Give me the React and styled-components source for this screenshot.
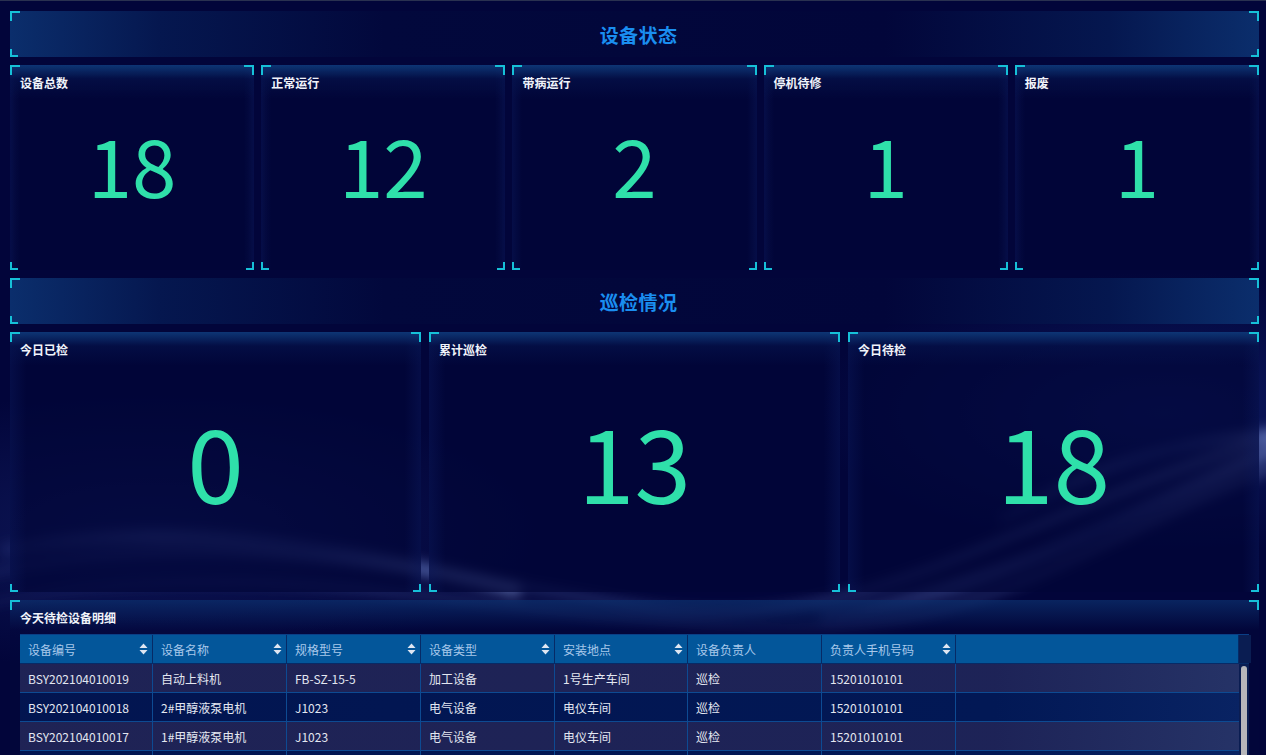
import styled, { createGlobalStyle, css } from "styled-components";

const GlobalStyle = createGlobalStyle`
  html, body { margin: 0; padding: 0; background: #02053a; }
  body {
    font-family: "Noto Sans CJK SC", "Noto Sans", sans-serif;
    color: #e6ebf5;
    border-top: 1px solid #2a3150;
  }
  * { box-sizing: border-box; }
`;

const Screen = styled.div`
  position: relative;
  min-height: 100vh;
  padding: 10px 7px 10px 10px;
  overflow: hidden;
  background:
    radial-gradient(ellipse 40% 22% at 92% 45%, rgba(30, 60, 160, 0.35), transparent 70%),
    radial-gradient(ellipse 45% 22% at 12% 58%, rgba(36, 56, 140, 0.35), transparent 70%),
    #02053a;
`;

const Waves = styled.svg`
  position: absolute;
  left: 0;
  top: 400px;
  width: 100%;
  height: 300px;
  pointer-events: none;
  z-index: 0;
`;

const Content = styled.div`
  position: relative;
  z-index: 1;
  display: flex;
  flex-direction: column;
  gap: 8px;
`;

// small cyan brackets on the corners of every panel
const bracket = css`
  &::before, &::after, & > .c-bl, & > .c-br {
    content: "";
    position: absolute;
    width: 8px;
    height: 8px;
    border-color: #16c0d8;
    border-style: solid;
    pointer-events: none;
  }
  &::before { top: 0; left: 0; border-width: 2px 0 0 2px; }
  &::after { top: 0; right: 0; border-width: 2px 2px 0 0; }
  & > .c-bl { bottom: 0; left: 0; border-width: 0 0 2px 2px; }
  & > .c-br { bottom: 0; right: 0; border-width: 0 2px 2px 0; }
`;

const TitleBar = styled.div`
  position: relative;
  height: 46px;
  display: flex;
  align-items: center;
  justify-content: center;
  padding-left: 8px;
  background: linear-gradient(
    to right,
    #0b2e6c 0%,
    #05174f 12%,
    #02083c 30%,
    #02063a 70%,
    #05174f 88%,
    #0b2e6c 100%
  );
  ${bracket}
`;

const Title = styled.h2`
  margin: 0;
  font-size: 19px;
  font-weight: 700;
  color: #1a8ef0;
  letter-spacing: 0.4px;
`;

const CardRow = styled.div`
  display: grid;
  grid-template-columns: repeat(${(p) => p.$cols}, 1fr);
  gap: ${(p) => p.$gap}px;
  height: ${(p) => p.$height}px;
`;

const Card = styled.div`
  position: relative;
  display: flex;
  flex-direction: column;
  background:
    linear-gradient(to bottom, rgba(14, 56, 120, 0.95) 0, rgba(6, 22, 80, 0.5) 14px, rgba(2, 6, 58, 0) 34px),
    linear-gradient(to right, rgba(14, 30, 100, 0.35), rgba(2, 6, 58, 0) 4%, rgba(2, 6, 58, 0) 96%, rgba(14, 30, 100, 0.35)),
    rgba(2, 6, 56, 0.7);
  ${bracket}
`;

const Label = styled.div`
  padding: 10px 10px 0;
  font-size: 12px;
  font-weight: 700;
  line-height: 16px;
  color: #f0f3fa;
`;

const Value = styled.div`
  flex: 1;
  display: flex;
  align-items: center;
  justify-content: center;
  padding-bottom: ${(p) => p.$lift}px;
  font-size: ${(p) => p.$size}px;
  font-weight: 400;
  line-height: 1;
  color: #2fe0aa;
`;

const TablePanel = styled.div`
  position: relative;
  padding: 10px 10px 10px;
  background:
    linear-gradient(to bottom, rgba(14, 56, 120, 0.6) 0, rgba(2, 6, 58, 0) 30px),
    rgba(2, 8, 60, 0.4);
  ${bracket}
`;

const PanelLabel = styled(Label)`
  padding: 0 0 8px;
`;

const cols = "133px 134px 134px 134px 133px 134px 134px 1fr";

const HeadRow = styled.div`
  display: grid;
  grid-template-columns: ${cols} 10px;
  height: 30px;
  background: #03569a;
  border-top: 1px solid #0a3f86;
  border-bottom: 1px solid #072a66;
`;

const HeadCell = styled.div`
  display: flex;
  align-items: center;
  justify-content: space-between;
  padding: 0 4px 0 8px;
  font-size: 12px;
  color: #a8c8ea;
  border-right: 1px solid #062a66;
  &:last-child { background: #0a1d52; border-right: 0; }
`;

const SortIcon = styled.svg`
  width: 9px;
  height: 12px;
  flex: none;
`;

const Body = styled.div`
  display: flex;
`;

const Rows = styled.div`
  flex: 1;
`;

const Track = styled.div`
  width: 10px;
  flex: none;
  background: #0a1d52;
  padding: 2px 2px 0;
`;

const Thumb = styled.div`
  height: 180px;
  border-radius: 3px;
  background: #b6b6ba;
`;

const Row = styled.div`
  display: grid;
  grid-template-columns: ${cols};
  height: 29px;
  border-bottom: 1px solid #0d4a92;
  background: ${(p) =>
    p.$odd
      ? "linear-gradient(to right, rgba(34, 38, 88, 0.9), rgba(34, 40, 92, 0.85) 80%, rgba(46, 62, 114, 0.8))"
      : "linear-gradient(to right, rgba(2, 22, 82, 0.92), rgba(2, 26, 88, 0.9) 80%, rgba(10, 40, 106, 0.85))"};
`;

const Cell = styled.div`
  display: flex;
  align-items: center;
  padding: 0 8px;
  font-size: 12px;
  color: #e3e7f1;
  border-right: 1px solid #0d4a92;
  white-space: nowrap;
  &:last-child { border-right: 0; }
`;

const Corners = () => (
  <>
    <span className="c-bl" />
    <span className="c-br" />
  </>
);

const Sort = () => (
  <SortIcon viewBox="0 0 9 12">
    <path d="M4.5 0.5 L8.5 5 H0.5 Z" fill="#dfe6f2" />
    <path d="M4.5 11.5 L8.5 7 H0.5 Z" fill="#dfe6f2" />
  </SortIcon>
);

const status = [
  ["设备总数", 18],
  ["正常运行", 12],
  ["带病运行", 2],
  ["停机待修", 1],
  ["报废", 1],
];

const patrol = [
  ["今日已检", 0],
  ["累计巡检", 13],
  ["今日待检", 18],
];

const headers = [
  ["设备编号", true],
  ["设备名称", true],
  ["规格型号", true],
  ["设备类型", true],
  ["安装地点", true],
  ["设备负责人", false],
  ["负责人手机号码", true],
  ["", false],
];

const rows = [
  ["BSY202104010019", "自动上料机", "FB-SZ-15-5", "加工设备", "1号生产车间", "巡检", "15201010101"],
  ["BSY202104010018", "2#甲醇液泵电机", "J1023", "电气设备", "电仪车间", "巡检", "15201010101"],
  ["BSY202104010017", "1#甲醇液泵电机", "J1023", "电气设备", "电仪车间", "巡检", "15201010101"],
  ["BSY202104010016", "循环水泵", "IS80-65", "动力设备", "2号生产车间", "巡检", "15201010101"],
  ["BSY202104010015", "空气压缩机", "GA-37", "动力设备", "空压站", "巡检", "15201010101"],
  ["BSY202104010014", "冷却塔风机", "LF-22", "电气设备", "循环水站", "巡检", "15201010101"],
  ["BSY202104010013", "反应釜搅拌器", "FY-3000", "加工设备", "1号生产车间", "巡检", "15201010101"],
  ["BSY202104010012", "离心机", "LW-450", "加工设备", "2号生产车间", "巡检", "15201010101"],
];

export default function App() {
  return (
    <>
      <GlobalStyle />
      <Screen>
        <Waves viewBox="0 0 1266 300" preserveAspectRatio="none">
          <defs>
            <filter id="soft" x="-10%" y="-50%" width="120%" height="200%">
              <feGaussianBlur stdDeviation="6" />
            </filter>
            <linearGradient id="streak" x1="0" x2="1" y1="0" y2="0">
              <stop offset="0" stopColor="#6a86e0" stopOpacity="0.12" />
              <stop offset="0.3" stopColor="#7a96e8" stopOpacity="0.32" />
              <stop offset="0.6" stopColor="#6a88e0" stopOpacity="0.25" />
              <stop offset="1" stopColor="#9ab2f4" stopOpacity="0.45" />
            </linearGradient>
          </defs>
          <g filter="url(#soft)" fill="none" stroke="url(#streak)">
            <path d="M-20 175 C 200 120, 420 170, 640 205 S 1000 120, 1290 30" strokeWidth="8" />
            <path d="M-20 205 C 220 150, 460 205, 720 225 S 1060 150, 1290 60" strokeWidth="5" />
            <path d="M0 150 C 160 120, 320 140, 520 190" strokeWidth="14" />
            <path d="M820 215 C 960 200, 1100 130, 1290 40" strokeWidth="16" />
            <path d="M1000 120 C 1100 60, 1180 40, 1290 30" strokeWidth="10" />
          </g>
        </Waves>
        <Content>
          <TitleBar>
            <Corners />
            <Title>设备状态</Title>
          </TitleBar>
          <CardRow $cols={5} $gap={7} $height={205}>
            {status.map(([name, n]) => (
              <Card key={name}>
                <Corners />
                <Label>{name}</Label>
                <Value $size={80} $lift={36}>{n}</Value>
              </Card>
            ))}
          </CardRow>
          <TitleBar>
            <Corners />
            <Title>巡检情况</Title>
          </TitleBar>
          <CardRow $cols={3} $gap={8} $height={260}>
            {patrol.map(([name, n]) => (
              <Card key={name}>
                <Corners />
                <Label>{name}</Label>
                <Value $size={102} $lift={30}>{n}</Value>
              </Card>
            ))}
          </CardRow>
          <TablePanel>
            <Corners />
            <PanelLabel>今天待检设备明细</PanelLabel>
            <HeadRow>
              {headers.map(([h, sortable], i) => (
                <HeadCell key={i}>
                  <span>{h}</span>
                  {sortable && <Sort />}
                </HeadCell>
              ))}
              <HeadCell />
            </HeadRow>
            <Body>
              <Rows>
                {rows.map((r, i) => (
                  <Row key={r[0]} $odd={i % 2 === 0}>
                    {r.map((v, j) => (
                      <Cell key={j}>{v}</Cell>
                    ))}
                    <Cell />
                  </Row>
                ))}
              </Rows>
              <Track>
                <Thumb />
              </Track>
            </Body>
          </TablePanel>
        </Content>
      </Screen>
    </>
  );
}
